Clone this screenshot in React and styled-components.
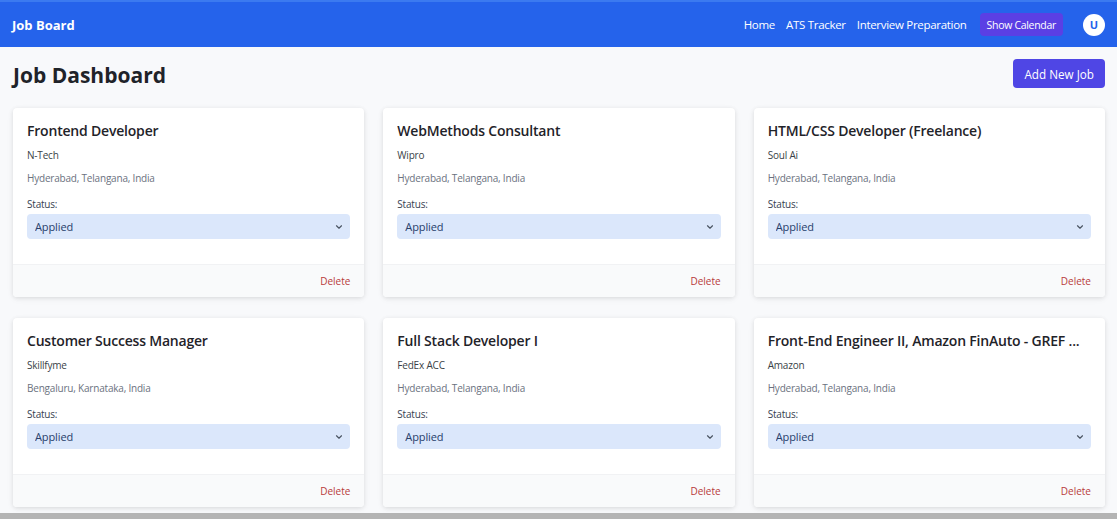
import React from "react";
import styled, { createGlobalStyle } from "styled-components";
import { ChevronDown } from "lucide-react";

const jobs = [
  { title: "Frontend Developer", company: "N-Tech", location: "Hyderabad, Telangana, India" },
  { title: "WebMethods Consultant", company: "Wipro", location: "Hyderabad, Telangana, India" },
  { title: "HTML/CSS Developer (Freelance)", company: "Soul Ai", location: "Hyderabad, Telangana, India" },
  { title: "Customer Success Manager", company: "Skillfyme", location: "Bengaluru, Karnataka, India" },
  { title: "Full Stack Developer I", company: "FedEx ACC", location: "Hyderabad, Telangana, India" },
  { title: "Front-End Engineer II, Amazon FinAuto - GREF ...", company: "Amazon", location: "Hyderabad, Telangana, India" },
];

const Global = createGlobalStyle`
  html, body {
    margin: 0;
    padding: 0;
    overflow: hidden;
    background: #f8f9fb;
    font-family: "Open Sans", "Noto Sans", sans-serif;
  }
  * { box-sizing: border-box; }
`;

const App = () => {
  return (
    <Page>
      <Global />
      <NavBar>
        <Brand>Job Board</Brand>
        <NavLinks>
          <NavLink>Home</NavLink>
          <NavLink>ATS Tracker</NavLink>
          <NavLink>Interview Preparation</NavLink>
          <CalendarButton>Show Calendar</CalendarButton>
          <Avatar>U</Avatar>
        </NavLinks>
      </NavBar>
      <Main>
        <HeaderRow>
          <h1>Job Dashboard</h1>
          <AddButton>Add New Job</AddButton>
        </HeaderRow>
        <Grid>
          {jobs.map((job) => (
            <Card key={job.title}>
              <CardBody>
                <Title>{job.title}</Title>
                <Company>{job.company}</Company>
                <Location>{job.location}</Location>
                <StatusLabel>Status:</StatusLabel>
                <SelectWrap>
                  <select defaultValue="Applied">
                    <option>Applied</option>
                    <option>Interviewing</option>
                    <option>Offer</option>
                    <option>Rejected</option>
                  </select>
                  <ChevronDown size={10} strokeWidth={2.8} />
                </SelectWrap>
              </CardBody>
              <CardFooter>
                <DeleteButton>Delete</DeleteButton>
              </CardFooter>
            </Card>
          ))}
        </Grid>
      </Main>
      <BottomBar />
    </Page>
  );
};

export default App;

const Page = styled.div`
  min-height: 100vh;
  position: relative;
`;

const NavBar = styled.nav`
  height: 47px;
  background: #2563eb;
  border-top: 2px solid #3b7af0;
  display: flex;
  align-items: center;
  justify-content: space-between;
  padding: 0 12px 0 12px;
`;

const Brand = styled.div`
  color: #fff;
  font-weight: 700;
  font-size: 13px;
`;

const NavLinks = styled.div`
  display: flex;
  align-items: center;
`;

const NavLink = styled.a`
  color: #fff;
  font-size: 11.5px;
  letter-spacing: -0.3px;
  margin-right: 11px;
  cursor: pointer;
`;

const CalendarButton = styled.button`
  background: #5b3fe4;
  color: #fff;
  border: none;
  border-radius: 4px;
  font-family: inherit;
  font-size: 10.5px;
  letter-spacing: -0.3px;
  height: 23px;
  padding: 0 7px;
  margin-left: 2px;
  margin-right: 20px;
`;

const Avatar = styled.div`
  width: 22px;
  height: 22px;
  border-radius: 50%;
  background: #fff;
  color: #2563eb;
  font-weight: 700;
  font-size: 11px;
  display: flex;
  align-items: center;
  justify-content: center;
`;

const Main = styled.main`
  padding: 12px 12px 0 13px;
`;

const HeaderRow = styled.div`
  display: flex;
  align-items: center;
  justify-content: space-between;
  margin-bottom: 20px;
  h1 {
    margin: 0;
    font-size: 21px;
    font-weight: 700;
    color: #1f2329;
    position: relative;
    top: 1px;
  }
`;

const AddButton = styled.button`
  background: #4f46e5;
  color: #fff;
  border: none;
  border-radius: 4px;
  font-family: inherit;
  font-size: 11.7px;
  height: 29px;
  padding: 0 11px;
`;

const Grid = styled.div`
  display: grid;
  grid-template-columns: repeat(3, 1fr);
  column-gap: 19px;
  row-gap: 21px;
`;

const Card = styled.div`
  background: #fff;
  border-radius: 4px;
  box-shadow: 0 1px 4px rgba(0, 0, 0, 0.1), 0 2px 8px rgba(0, 0, 0, 0.04);
  overflow: hidden;
`;

const CardBody = styled.div`
  padding: 13px 14px 25px 14px;
`;

const Title = styled.h2`
  margin: 0 0 7px 0;
  font-size: 14px;
  font-weight: 600;
  letter-spacing: -0.2px;
  color: #1f2329;
  line-height: 20px;
  white-space: nowrap;
  overflow: hidden;
  text-overflow: ellipsis;
`;

const SmallText = styled.div`
  font-size: 10px;
  letter-spacing: -0.2px;
  line-height: 14px;
`;

const Company = styled(SmallText)`
  color: #3a3f47;
  margin-bottom: 9px;
`;

const Location = styled(SmallText)`
  color: #6b7280;
  margin-bottom: 12px;
`;

const StatusLabel = styled(SmallText)`
  color: #374151;
  margin-bottom: 3px;
`;

const SelectWrap = styled.div`
  position: relative;
  select {
    appearance: none;
    width: 100%;
    height: 25px;
    border: none;
    border-radius: 4px;
    background: #dbe7fb;
    color: #28406b;
    font-family: inherit;
    font-size: 11px;
    letter-spacing: -0.1px;
    padding: 0 8px;
    outline: none;
  }
  svg {
    position: absolute;
    right: 6px;
    top: 8px;
    color: #4b5563;
    pointer-events: none;
  }
`;

const CardFooter = styled.div`
  background: #f9fafb;
  border-top: 1px solid #f1f2f4;
  height: 33px;
  display: flex;
  align-items: center;
  justify-content: flex-end;
  padding: 0 14px;
`;

const DeleteButton = styled.button`
  background: none;
  border: none;
  padding: 0;
  color: #b83a3a;
  font-family: inherit;
  font-size: 10px;
  cursor: pointer;
`;

const BottomBar = styled.div`
  position: fixed;
  left: 0;
  right: 0;
  bottom: 0;
  height: 6px;
  background: #b4b4b4;
`;
